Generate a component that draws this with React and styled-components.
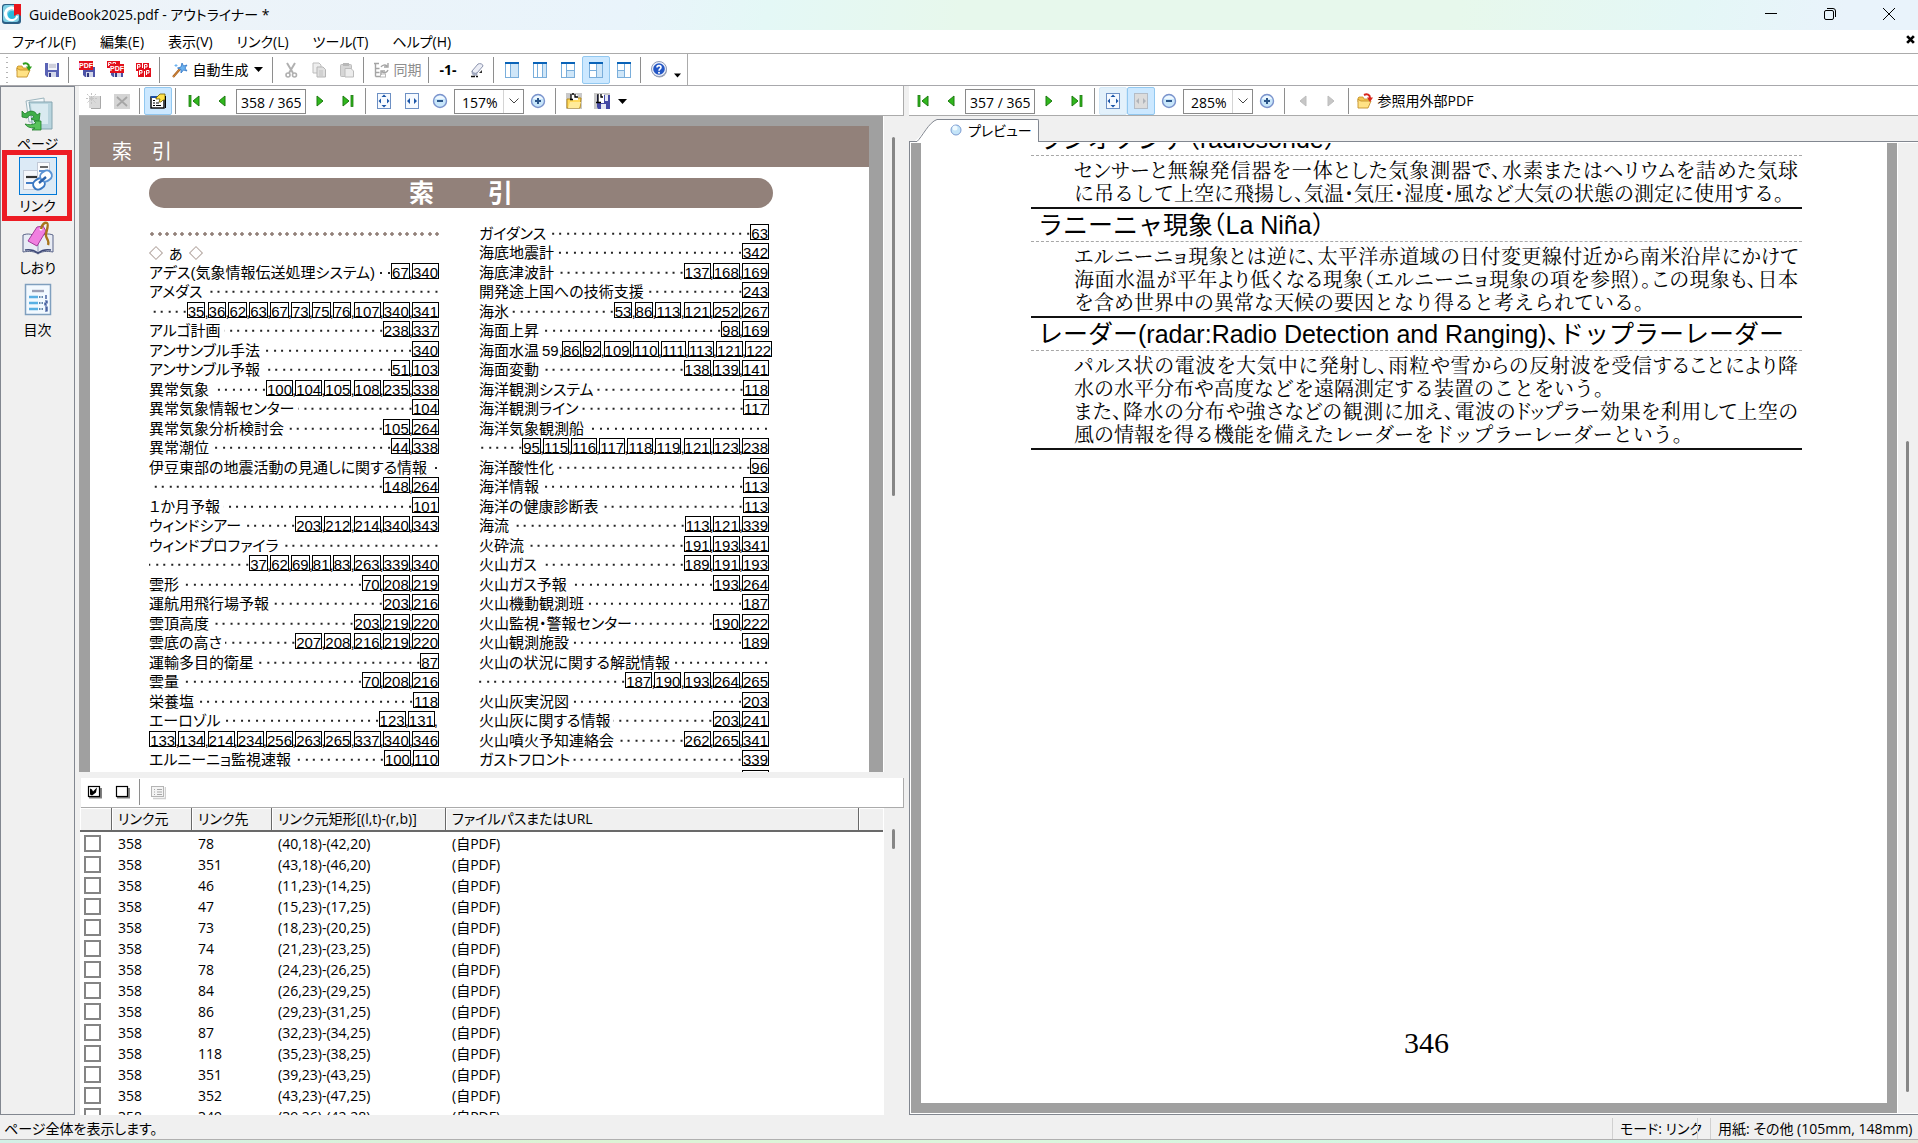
import React, { useState } from 'react';
import styled, { createGlobalStyle } from 'styled-components';

const UI_FONT = '"Open Sans", "Noto Sans CJK JP", sans-serif';
const DOC_FONT = '"Liberation Sans", "Noto Sans CJK JP", sans-serif';

const MENUS = ['ファイル(F)', '編集(E)', '表示(V)', 'リンク(L)', 'ツール(T)', 'ヘルプ(H)'];

// [label, linked pages, plain pages before the links]
const INDEX_LEFT = [
  ['アデス(気象情報伝送処理システム)', '67,340'],
  ['アメダス', ''],
  ['', '35,36,62,63,67,73,75,76,107,340,341'],
  ['アルゴ計画', '238,337'],
  ['アンサンブル手法', '340'],
  ['アンサンブル予報', '51,103'],
  ['異常気象', '100,104,105,108,235,338'],
  ['異常気象情報センター', '104'],
  ['異常気象分析検討会', '105,264'],
  ['異常潮位', '44,338'],
  ['伊豆東部の地震活動の見通しに関する情報', ''],
  ['', '148,264'],
  ['１か月予報', '101'],
  ['ウィンドシアー', '203,212,214,340,343'],
  ['ウィンドプロファイラ', ''],
  ['', '37,62,69,81,83,263,339,340'],
  ['雲形', '70,208,219'],
  ['運航用飛行場予報', '203,216'],
  ['雲頂高度', '203,219,220'],
  ['雲底の高さ', '207,208,216,219,220'],
  ['運輸多目的衛星', '87'],
  ['雲量', '70,208,216'],
  ['栄養塩', '118'],
  ['エーロゾル', '123,131,'],
  ['', '133,134,214,234,256,263,265,337,340,346'],
  ['エルニーニョ監視速報', '100,110'],
];

const INDEX_RIGHT = [
  ['ガイダンス', '63'],
  ['海底地震計', '342'],
  ['海底津波計', '137,168,169'],
  ['開発途上国への技術支援', '243'],
  ['海氷', '53,86,113,121,252,267'],
  ['海面上昇', '98,169'],
  ['海面水温', '86,92,109,110,111,113,121,122', '59,'],
  ['海面変動', '138,139,141'],
  ['海洋観測システム', '118'],
  ['海洋観測ライン', '117'],
  ['海洋気象観測船', ''],
  ['', '95,115,116,117,118,119,121,123,238'],
  ['海洋酸性化', '96'],
  ['海洋情報', '113'],
  ['海洋の健康診断表', '113'],
  ['海流', '113,121,339'],
  ['火砕流', '191,193,341'],
  ['火山ガス', '189,191,193'],
  ['火山ガス予報', '193,264'],
  ['火山機動観測班', '187'],
  ['火山監視・警報センター', '190,222'],
  ['火山観測施設', '189'],
  ['火山の状況に関する解説情報', ''],
  ['', '187,190,193,264,265'],
  ['火山灰実況図', '203'],
  ['火山灰に関する情報', '203,241'],
  ['火山噴火予知連絡会', '262,265,341'],
  ['ガストフロント', '339'],
  ['', '156'],
];

const ARTICLES = [
  {
    title: 'ラジオゾンデ（radiosonde）',
    lines: [
      'センサーと無線発信器を一体とした気象測器で、水素またはヘリウムを詰めた気球',
      'に吊るして上空に飛揚し、気温・気圧・湿度・風など大気の状態の測定に使用する。',
    ],
  },
  {
    title: 'ラニーニャ現象（La Niña）',
    lines: [
      'エルニーニョ現象とは逆に、太平洋赤道域の日付変更線付近から南米沿岸にかけて',
      '海面水温が平年より低くなる現象（エルニーニョ現象の項を参照）。この現象も、日本',
      'を含め世界中の異常な天候の要因となり得ると考えられている。',
    ],
  },
  {
    title: 'レーダー(radar:Radio Detection and Ranging)、ドップラーレーダー',
    lines: [
      'パルス状の電波を大気中に発射し、雨粒や雪からの反射波を受信することにより降',
      '水の水平分布や高度などを遠隔測定する装置のことをいう。',
      'また、降水の分布や強さなどの観測に加え、電波のドップラー効果を利用して上空の',
      '風の情報を得る機能を備えたレーダーをドップラーレーダーという。',
    ],
  },
];

const LINKS = [
  ['358', '78', '(40,18)-(42,20)'],
  ['358', '351', '(43,18)-(46,20)'],
  ['358', '46', '(11,23)-(14,25)'],
  ['358', '47', '(15,23)-(17,25)'],
  ['358', '73', '(18,23)-(20,25)'],
  ['358', '74', '(21,23)-(23,25)'],
  ['358', '78', '(24,23)-(26,25)'],
  ['358', '84', '(26,23)-(29,25)'],
  ['358', '86', '(29,23)-(31,25)'],
  ['358', '87', '(32,23)-(34,25)'],
  ['358', '118', '(35,23)-(38,25)'],
  ['358', '351', '(39,23)-(43,25)'],
  ['358', '352', '(43,23)-(47,25)'],
  ['358', '349', '(39,26)-(42,28)'],
];

/* ---------- icons ---------- */

const Icon = ({ size = 16, box = 16, children }) => (
  <svg width={size} height={size} viewBox={`0 0 ${box} ${box}`} aria-hidden="true">{children}</svg>
);

const AppLogo = () => (
  <Icon size={20} box={20}>
    <rect x="0" y="0" width="19" height="20" rx="3" fill="#2b5f86" />
    <rect x="1" y="1" width="16" height="17" rx="3" fill="#7fd0e6" />
    <path d="M13 5a6 6 0 1 0 2 7" fill="none" stroke="#fff" strokeWidth="3" />
    <circle cx="10" cy="11" r="4" fill="#29b7dc" />
    <path d="M12 0h7v12l-3-2-4 2z" fill="#e8141c" />
  </Icon>
);

const FolderIcon = ({ arrow = '#2f9e1c' }) => (
  <Icon>
    <path d="M1 5l1-1h4l1 2h5v3H1z" fill="#f3c64e" stroke="#c4912a" strokeWidth=".8" />
    <path d="M1 15V6l1 1 2 1h10l-3 7z" fill="#ffe285" stroke="#c4912a" strokeWidth=".9" />
    <path d="M7 2c3-1.500 6-.5 6 3" fill="none" stroke={arrow} strokeWidth="2" />
    <path d="M10 4.500h6L13 9z" fill={arrow} />
  </Icon>
);

const SaveIcon = () => (
  <Icon>
    <path d="M1 1h14v14H3l-2-2z" fill="#5a63b5" />
    <rect x="4" y="1" width="9" height="7" fill="#f2f4fa" />
    <path d="M5 3h7M5 5h7" stroke="#aab" strokeWidth="1" />
    <rect x="4" y="10" width="8" height="5" fill="#d4d8ea" />
    <rect x="5" y="11" width="2" height="4" fill="#343a80" />
  </Icon>
);

const Tag = ({ x, y }) => (
  <>
    <rect x={x} y={y} width="14" height="9" fill="#e3101c" />
    <text x={x + 7} y={y + 7} fontSize="7" fontWeight="700" fill="#fff" textAnchor="middle" fontFamily="Liberation Sans, sans-serif">PDF</text>
  </>
);

const PdfSaveIcon = ({ many }) => (
  <Icon size={17} box={17}>
    <path d="M4 6h12v10H6l-2-2z" fill="#4c53a8" />
    <rect x="7" y="11" width="7" height="5" fill="#d4d8ea" />
    <rect x="8" y="12" width="2" height="4" fill="#343a80" />
    {many && <rect x="0" y="0" width="13" height="7" fill="#e3101c" />}
    {many && <path d="M1.500 5V1.500H4V3.500H2M6 5V1.500h2.500v2H6.500" fill="none" stroke="#fff" strokeWidth=".9" />}
    <Tag x={many ? 3 : 0} y={many ? 3 : 0} />
  </Icon>
);

const PdfSplitIcon = () => (
  <Icon>
    <rect x="1" y="1" width="6" height="8" fill="#e3101c" />
    <rect x="8" y="1" width="6" height="8" fill="#e3101c" />
    <rect x="3" y="6" width="6" height="9" fill="#e3101c" />
    <rect x="10" y="6" width="6" height="9" fill="#e3101c" />
    <path d="M2.500 7V2.500H5V5H3M9.500 7V2.500H12V5h-2M4.500 13V8.500H7V11H5M11.500 13V8.500H14V11h-2" fill="none" stroke="#fff" />
  </Icon>
);

const WandIcon = () => (
  <Icon>
    <path d="M1 15l7-8" stroke="#a35a1c" strokeWidth="2.200" />
    <path d="M1 15l7-8" stroke="#e8a14a" strokeWidth=".8" />
    <path d="M10 1l1.500 3L15 3l-2 3 2 3-3.500-1L9 11V7.500L5.500 6 9 5z" fill="#6db3f0" stroke="#2f74c4" strokeWidth=".8" />
    <path d="M4 2v3M2.500 3.500h3" stroke="#6db3f0" />
  </Icon>
);

const CutIcon = () => (
  <Icon>
    <path d="M4 1l6 10M12 1L6 11" stroke="#b0b0b0" strokeWidth="2" />
    <circle cx="5" cy="13" r="2" fill="none" stroke="#b0b0b0" strokeWidth="1.600" />
    <circle cx="11.500" cy="13" r="2" fill="none" stroke="#b0b0b0" strokeWidth="1.600" />
  </Icon>
);

const CopyIcon = () => (
  <Icon>
    <path d="M2 1h6l2 2v8H2z" fill="#eee" stroke="#bdbdbd" />
    <path d="M6 5h6l2.500 2.500V15H6z" fill="#e0e0e0" stroke="#b5b5b5" />
    <path d="M8 9h4M8 11h4M8 13h4" stroke="#c2c2c2" />
  </Icon>
);

const PasteIcon = () => (
  <Icon>
    <rect x="1.500" y="2.500" width="11" height="12" rx="1" fill="#d6d6d6" stroke="#bdbdbd" />
    <rect x="4" y="1" width="6" height="3" fill="#b8b8b8" />
    <path d="M6 6.500h6l2.500 2.500v6H6z" fill="#ececec" stroke="#bcbcbc" />
  </Icon>
);

const SyncIcon = () => (
  <Icon>
    <path d="M1 1.500h5M2.500 1v13.500M2.500 6.500h4M2.500 10.500h4M2.500 14.500h5" stroke="#a4a4a4" strokeWidth="1.400" fill="none" />
    <path d="M8 5a4 4 0 0 1 6-1M15 1v4h-4M15 8a4 4 0 0 1-6 2M8 13V9h4" stroke="#a4a4a4" strokeWidth="1.400" fill="none" />
    <rect x="7.500" y="12" width="5" height="3" fill="none" stroke="#b8b8b8" />
  </Icon>
);

const EraserIcon = () => (
  <Icon>
    <path d="M3 9l6-7c2-1 5 0 5 2L8 11c-2 1-5 0-5-2z" fill="#eceef6" stroke="#8b93ad" />
    <path d="M3 9c0 2 3 3 5 2v2c-2 1-5 0-5-2z" fill="#aeb5c9" stroke="#8b93ad" strokeWidth=".6" />
    <path d="M2 14.500h4M7 14.500h2" stroke="#111" strokeWidth="1.300" />
    <path d="M10 11l3-3v3z" fill="#333" />
  </Icon>
);

const PaneIcon = ({ lines, fill }) => (
  <Icon>
    <rect x="1.500" y="1.500" width="13" height="14" fill="#fff" stroke="#7aaedb" />
    <path d={fill} fill="#cfe6f8" />
    <path d={lines} stroke="#7aaedb" fill="none" />
    <rect x="1" y="0" width="14" height="2" fill="#0a63b8" />
  </Icon>
);

const PANES = [
  ['M6.500 2v13', 'M7 2h7v13H7z'],
  ['M5.500 2v13M10.500 2v13', 'M11 2h3v13h-3z'],
  ['M6.500 2v13M6.500 8.500h8', 'M7 9h7v6H7z'],
  ['M8.500 2v13M1.500 8.500h7', 'M9 2h5v13H9z'],
  ['M8.500 2v13M1.500 8.500h7', 'M2 9h6v6H2z'],
];

const HelpIcon = () => (
  <Icon size={17} box={17}>
    <circle cx="8.500" cy="9" r="7.500" fill="#9aa3b4" />
    <circle cx="8" cy="8" r="7.500" fill="#eef2fb" stroke="#8e9ab8" />
    <circle cx="8" cy="8" r="5.800" fill="#2457c5" />
    <path d="M6 6.500C6 4 10 4 10 6.300 10 8 8 7.800 8 9.800" fill="none" stroke="#fff" strokeWidth="1.600" />
    <circle cx="8" cy="11.800" r="1" fill="#fff" />
  </Icon>
);

const Caret = ({ w = 9 }) => (
  <svg width={w} height="5" viewBox="0 0 9 5" aria-hidden="true"><path d="M0 0h9L4.500 5z" fill="#000" /></svg>
);

const NewLinkIcon = () => (
  <Icon>
    <path d="M3 3h11v12H3z" fill="#d9d9d9" />
    <path d="M14.500 3v12.500H5" fill="none" stroke="#a8a8a8" />
    <path d="M1 1l9 9M10 1L1 10M5.500 0v11M0 5.500h11" stroke="#c4c4c4" strokeDasharray="2 1" />
  </Icon>
);

const DeleteIcon = () => (
  <Icon>
    <rect x="0" y="1" width="16" height="15" fill="#d4d4d4" />
    <path d="M3 4l10 9M13 4L3 13" stroke="#a6a6a6" strokeWidth="1.800" />
  </Icon>
);

const PropertyIcon = () => (
  <Icon>
    <rect x="1" y="4" width="13" height="11" fill="#fff" stroke="#000" strokeWidth="1.400" />
    <path d="M3 7.500h2M3 10h2M3 12.500h2M6 12.500h5M6 10h3" stroke="#000" />
    <path d="M1 4h6" stroke="#1b4fa8" strokeWidth="2" />
    <path d="M6 5l4-4h5v6h-2l-2 2H9l1-3H6z" fill="#ffe14a" stroke="#6b5a00" strokeWidth=".8" />
    <path d="M15.500 3v12" stroke="#000" />
  </Icon>
);

const NavIcon = ({ dir, bar, gray }) => {
  const x = dir === 'prev' ? 'M11 3v10L5 8z' : 'M5 3v10l6-5z';
  const barX = dir === 'prev' ? 3 : 11;
  const edge = gray ? '#bdbdbd' : '#1d7a10';
  return (
    <Icon>
      <path d={x} fill={gray ? '#c6c6c6' : '#2fb81c'} stroke={edge} transform={bar ? `translate(${dir === 'prev' ? 2 : -2} 0)` : undefined} />
      {bar && <rect x={barX} y="2.500" width="2" height="11" fill="#2fb81c" stroke={edge} strokeWidth=".8" />}
    </Icon>
  );
};

const FitPageIcon = () => (
  <Icon>
    <rect x="1.500" y=".5" width="13" height="15" fill="#f6faff" stroke="#6d90c4" />
    <path d="M8 1.500L10.500 4h-5zM8 14.500L10.500 12h-5zM2.500 8L5 5.500v5zM13.500 8L11 5.500v5z" fill="#1c56a8" />
  </Icon>
);

const FitWidthIcon = ({ gray }) => (
  <Icon>
    <rect x="1.500" y=".5" width="13" height="15" fill={gray ? '#dcdcdc' : '#f6faff'} stroke={gray ? '#b4bcc6' : '#6d90c4'} />
    <path d="M3 8l3-3v6zM13 8l-3-3v6z" fill={gray ? '#b0b4ba' : '#1c56a8'} />
  </Icon>
);

const ZoomIcon = ({ plus }) => (
  <Icon>
    <circle cx="8" cy="8" r="6.500" fill="#c8e6fa" stroke="#7b93cc" strokeWidth="1.400" />
    <path d="M3 6a5.500 5.500 0 0 1 10 0z" fill="#eef8ff" />
    <path d={plus ? 'M5 8h6M8 5v6' : 'M5 8h6'} stroke="#2a5488" strokeWidth="2" />
  </Icon>
);

const ClipIcon = ({ save }) => (
  <Icon>
    <rect width="16" height="16" fill="#c9c9c9" />
    {save
      ? <path d="M3 2h13v14H4l-1-2z" fill="#4449a5" />
      : <path d="M1 15V6h5l1-1h8l-1 10z" fill="#ffd95c" stroke="#b58a1c" />}
    {save
      ? <path d="M4 1h6v9H4z" fill="#fff" />
      : <path d="M5 1h5l2 2v4H5z" fill="#fff" />}
    <path d={save ? 'M4 1v8M2 9.500h5M7 1v3h2' : 'M5 1v5M4 6.500h3M9 1v3h3M8 1H6'} stroke="#000" strokeWidth="1.300" fill="none" />
    {save && <rect x="11" y="2" width="3" height="6" fill="#e6e8f4" />}
    {save && <rect x="7" y="11" width="5" height="5" fill="#e6e8f4" />}
    {!save && <path d="M2 15l2-6h11l-2 6z" fill="#ffeb9a" />}
  </Icon>
);

const PagesIcon = () => (
  <Icon size={34} box={34}>
    <path d="M5 4l18-3 1 24H8z" fill="#f4f9fb" stroke="#9db5be" />
    <path d="M8 5h23v27H12z" fill="#b9d5de" stroke="#85a5b0" />
    <path d="M10 7h17v20H12z" fill="#d9eaf0" />
    <path d="M1 14l3 3c4-4 10-4 12 1l3-2-1 9-8-3 3-2c-2-3-5-2-7 1l-5-1z" fill="#3fae49" stroke="#1f7d2a" strokeWidth=".8" />
    <path d="M20 24v9h-9l3-2c-5 0-8-1-10-4 3 1 8 1 11-1l-2-2z" fill="#58c35c" stroke="#1f7d2a" strokeWidth=".8" />
  </Icon>
);

const ChainIcon = () => (
  <Icon size={34} box={34}>
    <rect x="16.500" y="3.500" width="12" height="15" fill="#fafbfd" stroke="#c2c9d6" />
    <path d="M19 8h8" stroke="#444" strokeWidth="1.600" />
    <path d="M18 12h9" stroke="#2f6fc0" strokeWidth="1.500" />
    <rect x="2.500" y="11.500" width="14" height="19" fill="#f5f7fb" stroke="#c2c9d6" />
    <path d="M5 18h11" stroke="#333" strokeWidth="2.200" />
    <path d="M5 24h8" stroke="#2f6fc0" strokeWidth="1.800" />
    <rect x="12" y="20" width="12" height="10" rx="5" fill="#fff" stroke="#3a78c2" strokeWidth="2" transform="rotate(-35 18 25)" />
    <rect x="19" y="12" width="12" height="10" rx="5" fill="#fff" stroke="#5b93d4" strokeWidth="2" transform="rotate(-35 25 17)" />
    <path d="M18 24l7-6" stroke="#2b62aa" strokeWidth="2.400" />
  </Icon>
);

const BookmarkIcon = () => (
  <Icon size={34} box={34}>
    <path d="M2 14c5-2 10-1 15 3 5-4 10-5 15-3v17c-6-1-11-1-15 2-4-3-9-3-15-2z" fill="#e8ecf5" stroke="#5a6488" />
    <path d="M17 17v15" stroke="#8b94b4" />
    <path d="M4 29c5-1 9 0 13 3 4-3 8-4 13-3" fill="none" stroke="#3f4a78" strokeWidth="1.500" />
    <path d="M16 6l6-1 3 5-9 15-9-5z" fill="#f07fe0" stroke="#a33a98" />
    <circle cx="20" cy="8" r="1.500" fill="#fff" />
    <path d="M20 8c1-5 4-7 6-6s0 6-1 11 4 5 2 11" fill="none" stroke="#a8741c" strokeWidth="2.400" />
  </Icon>
);

const TocIcon = () => (
  <Icon size={34} box={34}>
    <rect x="4.500" y="1.500" width="25" height="30" fill="#f2f9ff" stroke="#7f9fbe" strokeWidth="1.500" />
    <path d="M11 8h12" stroke="#9a9fb4" strokeWidth="2.400" />
    <path d="M8 14h9M8 20h9M8 26h9" stroke="#58b0e4" strokeWidth="2.600" />
    <path d="M18 14h5M18 20h5M18 26h5" stroke="#35608e" strokeWidth="1.600" strokeDasharray="1.500 1" />
    <path d="M25 12v4M24 18h2v2h-2v2h2M24 24h2v4h-2M24 26h2" stroke="#1d3c8a" strokeWidth="1.200" fill="none" />
  </Icon>
);

const CheckAllIcon = ({ checked }) => (
  <Icon>
    <path d="M2 13.500h12V4" fill="none" stroke="#808080" strokeWidth="2" />
    <rect x="1.500" y="2.500" width="11" height="10" fill="#fff" stroke="#000" strokeWidth="1.200" />
    {checked && <path d="M3 4.500l2 1 1 2 4-4-1 5-4 3-2-1z" fill="#000" />}
  </Icon>
);

const ListIcon = () => (
  <Icon>
    <path d="M3 14.500h12.500V3" fill="none" stroke="#d0d0d0" strokeWidth="1.500" />
    <rect x="1.500" y="2.500" width="12" height="10" fill="#f4f4f4" stroke="#b4b4b4" />
    <path d="M4 5.500h1M4 8h1M4 10.500h1M7 5.500h5M7 8h5M7 10.500h5" stroke="#a8a8a8" />
  </Icon>
);

/* ---------- pieces ---------- */

const NavGroup = ({ page, zoom, label, highlight }) => {
  const [value, setValue] = useState(page);
  return (
    <>
      <ToolButton aria-label="先頭ページ"><NavIcon dir="prev" bar /></ToolButton>
      <ToolButton aria-label="前ページ"><NavIcon dir="prev" /></ToolButton>
      <PageInput aria-label={label} value={value} onChange={(e) => setValue(e.target.value)} />
      <ToolButton aria-label="次ページ"><NavIcon dir="next" /></ToolButton>
      <ToolButton aria-label="最終ページ"><NavIcon dir="next" bar /></ToolButton>
      <Separator />
      <ToolButton aria-label="全体表示" $hover={highlight}><FitPageIcon /></ToolButton>
      <ToolButton aria-label="幅に合わせる" $active={highlight}><FitWidthIcon gray={highlight} /></ToolButton>
      <ToolButton aria-label="縮小"><ZoomIcon /></ToolButton>
      <ZoomBox>
        <ZoomSelect aria-label="倍率" defaultValue={zoom}>
          <option>{zoom}</option>
          <option>100%</option>
        </ZoomSelect>
        <ZoomArrow>
          <svg width="10" height="6" viewBox="0 0 10 6" aria-hidden="true"><path d="M.5.5L5 5 9.500.5" fill="none" stroke="#444" /></svg>
        </ZoomArrow>
      </ZoomBox>
      <ToolButton aria-label="拡大"><ZoomIcon plus /></ToolButton>
      <Separator />
    </>
  );
};

const IndexRow = ({ row }) => {
  const [label, pages, plain] = row;
  const list = pages ? pages.split(',') : [];
  return (
    <IndexLine>
      {label && <IndexLabel>{label}</IndexLabel>}
      <Leader />
      {(plain || pages) && (
        <Pages>
          {plain}
          {list.map((p, i) => (
            <React.Fragment key={i}>
              {p && <PageLink href={`#p${p}`}>{p}</PageLink>}
              {i < list.length - 1 && ','}
            </React.Fragment>
          ))}
        </Pages>
      )}
    </IndexLine>
  );
};

const IndexPage = () => (
  <IndexSheet>
    <SheetBand>索　引</SheetBand>
    <Pill><span>索</span><span>引</span></Pill>
    <IndexColumns>
      <IndexColumn>
        <BrownDots />
        <KanaHeading><Diamond />あ<Diamond /></KanaHeading>
        {INDEX_LEFT.map((row, i) => <IndexRow key={i} row={row} />)}
      </IndexColumn>
      <IndexColumn>
        {INDEX_RIGHT.map((row, i) => <IndexRow key={i} row={row} />)}
      </IndexColumn>
    </IndexColumns>
  </IndexSheet>
);

const LinkTable = () => (
  <TableArea>
    <TableScroll>
      <Table>
        <colgroup>
          <col width="32" /><col width="80" /><col width="80" /><col width="174" /><col /><col width="24" />
        </colgroup>
        <thead>
          <tr>
            <Th /><Th>リンク元</Th><Th>リンク先</Th><Th>リンク元矩形[(l,t)-(r,b)]</Th><Th>ファイルパスまたはURL</Th><Th $last />
          </tr>
        </thead>
        <tbody>
          {LINKS.map((link, i) => (
            <tr key={i}>
              <CheckCell><CheckBox type="checkbox" aria-label={`リンク ${link[2]}`} /></CheckCell>
              <Td>{link[0]}</Td>
              <Td>{link[1]}</Td>
              <Td>{link[2]}</Td>
              <Td>(自PDF)</Td>
              <Td />
            </tr>
          ))}
        </tbody>
      </Table>
    </TableScroll>
    <ScrollTrack $top={21} $length={20} />
  </TableArea>
);

const App = () => (
  <Window>
    <GlobalStyle />
    <TitleBar>
      <AppLogo />
      <Title>GuideBook2025.pdf - アウトライナー *</Title>
      <WindowButton aria-label="最小化"><svg width="12" height="12" viewBox="0 0 12 12"><path d="M0 5.500h12" stroke="#000" /></svg></WindowButton>
      <WindowButton aria-label="元に戻す">
        <svg width="12" height="12" viewBox="0 0 12 12" fill="none" stroke="#000">
          <rect x=".5" y="2.500" width="9" height="9" rx="1.500" />
          <path d="M3 .5h6a2.500 2.500 0 0 1 2.500 2.500v6" />
        </svg>
      </WindowButton>
      <WindowButton aria-label="閉じる"><svg width="12" height="12" viewBox="0 0 12 12"><path d="M0 0l12 12M12 0L0 12" stroke="#000" /></svg></WindowButton>
    </TitleBar>
    <MenuBar>
      {MENUS.map((m) => <MenuItem key={m}>{m}</MenuItem>)}
      <MdiClose aria-label="文書を閉じる">
        <svg width="9" height="9" viewBox="0 0 8 8"><path d="M1 1l6 6M7 1L1 7" stroke="#000" strokeWidth="2.400" /></svg>
      </MdiClose>
    </MenuBar>
    <MainToolbar>
      <Grip />
      <ToolButton aria-label="開く"><FolderIcon /></ToolButton>
      <ToolButton aria-label="保存"><SaveIcon /></ToolButton>
      <Separator />
      <ToolButton aria-label="PDF保存"><PdfSaveIcon /></ToolButton>
      <ToolButton aria-label="PDF一括保存"><PdfSaveIcon many /></ToolButton>
      <ToolButton aria-label="PDF分割"><PdfSplitIcon /></ToolButton>
      <Separator />
      <ToolButton $w={106}><WandIcon /><ToolText>自動生成</ToolText><Caret /></ToolButton>
      <Separator />
      <ToolButton aria-label="切り取り"><CutIcon /></ToolButton>
      <ToolButton aria-label="コピー"><CopyIcon /></ToolButton>
      <ToolButton aria-label="貼り付け"><PasteIcon /></ToolButton>
      <Separator />
      <ToolButton $w={58} $muted><SyncIcon /><ToolText>同期</ToolText></ToolButton>
      <Separator />
      <ToolButton $w={30} $bold>-1-</ToolButton>
      <ToolButton aria-label="消去"><EraserIcon /></ToolButton>
      <Separator />
      {PANES.map(([lines, fill], i) => (
        <ToolButton key={i} aria-label={`レイアウト${i + 1}`} $active={i === 3}><PaneIcon lines={lines} fill={fill} /></ToolButton>
      ))}
      <Separator />
      <ToolButton aria-label="ヘルプ"><HelpIcon /></ToolButton>
      <Overflow aria-label="その他"><Caret w={7} /></Overflow>
    </MainToolbar>

    <Body>
      <SideBar>
        <SideItem><SideFrame><PagesIcon /></SideFrame>ページ</SideItem>
        <SideItem $selected><SideFrame $selected><ChainIcon /></SideFrame>リンク</SideItem>
        <SideItem><SideFrame><BookmarkIcon /></SideFrame>しおり</SideItem>
        <SideItem><SideFrame><TocIcon /></SideFrame>目次</SideItem>
      </SideBar>

      <LeftPane>
        <PaneToolbar>
          <ToolButton aria-label="リンク追加"><NewLinkIcon /></ToolButton>
          <ToolButton aria-label="削除"><DeleteIcon /></ToolButton>
          <Separator />
          <ToolButton aria-label="プロパティ" $active><PropertyIcon /></ToolButton>
          <Separator />
          <NavGroup page="358 / 365" zoom="157%" label="ページ番号" />
          <ToolButton aria-label="リンク読込"><ClipIcon /></ToolButton>
          <ToolButton $w={44} $gap={8} aria-label="リンク保存"><ClipIcon save /><Caret /></ToolButton>
        </PaneToolbar>
        <Canvas>
          <CanvasView><IndexPage /></CanvasView>
          <ScrollTrack $top={21} $length={359} />
        </Canvas>
        <ListToolbar>
          <ToolButton aria-label="すべて選択"><CheckAllIcon checked /></ToolButton>
          <ToolButton aria-label="すべて解除"><CheckAllIcon /></ToolButton>
          <Separator />
          <ToolButton aria-label="一覧"><ListIcon /></ToolButton>
        </ListToolbar>
        <LinkTable />
      </LeftPane>

      <RightPane>
        <PaneToolbar>
          <NavGroup page="357 / 365" zoom="285%" label="プレビューのページ番号" highlight />
          <ToolButton aria-label="戻る"><NavIcon dir="prev" gray /></ToolButton>
          <ToolButton aria-label="進む"><NavIcon dir="next" gray /></ToolButton>
          <Separator />
          <ToolButton $w={124}><FolderIcon arrow="#d8261c" /><ToolText>参照用外部PDF</ToolText></ToolButton>
        </PaneToolbar>
        <TabStrip>
          <svg width="24" height="23" viewBox="0 0 24 23" aria-hidden="true">
            <path d="M0 23C6 21 16 3 24 .5V23z" fill="#fff" />
            <path d="M0 22.500h4C9 18 16 3 24 .5" fill="none" stroke="#828790" />
          </svg>
          <Tab><Icon size={14} box={14}><circle cx="7" cy="7" r="5" fill="#c4e4f8" stroke="#7b9bd0" /><circle cx="6" cy="5" r="2.500" fill="#effaff" /></Icon>プレビュー</Tab>
        </TabStrip>
        <Preview>
          <PreviewMat>
            <PreviewSheet>
              <Articles>
                {ARTICLES.map((a) => (
                  <Article key={a.title}>
                    <ArticleTitle>{a.title}</ArticleTitle>
                    <ArticleBody>
                      {a.lines.map((l) => <ArticleLine key={l} $full={!l.endsWith('。')}>{l}</ArticleLine>)}
                    </ArticleBody>
                  </Article>
                ))}
              </Articles>
              <Folio>346</Folio>
            </PreviewSheet>
          </PreviewMat>
          <ScrollTrack $top={298} $length={651} />
        </Preview>
      </RightPane>
    </Body>

    <StatusBar>
      <StatusText>ページ全体を表示します。</StatusText>
      <StatusCell $w={85}>モード: リンク</StatusCell>
      <StatusCell $w={13} />
      <StatusCell $w={208}>用紙: その他 (105mm, 148mm)</StatusCell>
    </StatusBar>
    <BottomEdge />
  </Window>
);

export default App;

const GlobalStyle = createGlobalStyle`
  * { box-sizing: border-box; }
  body { margin: 0; }
  button, input, select, table { font: inherit; color: inherit; }
  svg { flex: none; display: block; }
`;

const Window = styled.div`
  display: flex;
  flex-direction: column;
  height: 100vh;
  overflow: hidden;
  background: #f0f0f0;
  color: #000;
  font-family: ${UI_FONT};
  font-size: 14px;
  font-feature-settings: "palt";
  white-space: nowrap;
`;

const TitleBar = styled.header`
  display: flex;
  align-items: center;
  height: 30px;
  padding-left: 2px;
  padding-bottom: 2px;
  background: linear-gradient(100deg, #eef3f8 0%, #e9f4fb 33%, #e4f8f6 40%, #e7f8ec 50%, #e7f8ec 76%, #e4f7f6 88%, #e9f3fb 96%);
`;

const Title = styled.h1`
  flex: 1;
  margin: 0 0 0 7px;
  font-size: 14px;
  font-weight: 400;
`;

const WindowButton = styled.button`
  display: flex;
  align-items: center;
  justify-content: center;
  width: 59px;
  height: 28px;
  padding: 0;
  border: 0;
  background: none;
`;

const MenuBar = styled.nav`
  display: flex;
  align-items: center;
  height: 24px;
  border-bottom: 1px solid #ababab;
  background: #fff;
`;

const MenuItem = styled.button`
  padding: 0 12px;
  border: 0;
  background: none;
  line-height: 23px;
`;

const MdiClose = styled.button`
  margin-left: auto;
  padding: 0 3px 4px;
  border: 0;
  background: none;
`;

const ToolRow = styled.div`
  display: flex;
  align-items: center;
  flex: none;
  background: #fff;
`;

const MainToolbar = styled(ToolRow)`
  height: 32px;
  border-bottom: 1px solid #a8a8ac;
`;

const Grip = styled.div`
  width: 6px;
  height: 30px;
  margin: 0 0 0 4px;
  background-image: radial-gradient(circle, #b4b4b4 1px, transparent 1px);
  background-size: 6px 5px;
`;

const ToolButton = styled.button`
  display: flex;
  align-items: center;
  justify-content: center;
  gap: ${(p) => p.$gap || 5}px;
  flex: none;
  width: ${(p) => p.$w || 28}px;
  height: 28px;
  padding: 0;
  border: 1px solid ${(p) => (p.$active ? '#92c8f0' : p.$hover ? '#d4e9f8' : 'transparent')};
  border-radius: 2px;
  background: ${(p) => (p.$active ? '#cce8ff' : p.$hover ? '#e3f1fb' : 'none')};
  color: ${(p) => (p.$muted ? '#8d8d8d' : '#000')};
  font-weight: ${(p) => (p.$bold ? 700 : 400)};
`;

const ToolText = styled.span`
  line-height: 26px;
`;

const Separator = styled.span`
  flex: none;
  width: 1px;
  height: 26px;
  margin: 0 4px 0 2px;
  background: #8e8e8e;
`;

const Overflow = styled.button`
  display: flex;
  align-items: flex-end;
  width: 15px;
  height: 31px;
  padding: 0 0 7px 1px;
  border: 0;
  border-right: 1px solid #ababab;
  background: none;
`;

const PageInput = styled.input`
  flex: none;
  width: 70px;
  height: 25px;
  padding: 2px 4px 0;
  border: 1px solid #8a8a8a;
  background: #fff;
`;

const ZoomBox = styled.div`
  display: flex;
  flex: none;
  width: 70px;
  height: 25px;
  border: 1px solid #8a8a8a;
`;

const ZoomSelect = styled.select`
  appearance: none;
  width: 48px;
  padding: 2px 0 0 7px;
  border: 0;
  background: #fff;
`;

const ZoomArrow = styled.span`
  display: flex;
  align-items: center;
  justify-content: center;
  flex: 1;
  border-left: 1px solid #d4d4d4;
`;

const Body = styled.main`
  display: grid;
  grid-template-columns: 79px minmax(0, 830fr) minmax(0, 1009fr);
  flex: 1;
  min-height: 0;
`;

const SideBar = styled.aside`
  width: 75px;
  padding: 8px 0 0;
  border: 1px solid #828790;
  background: #f0f0f0;
`;

const SideItem = styled.button`
  position: relative;
  display: flex;
  flex-direction: column;
  align-items: center;
  width: 100%;
  height: 62px;
  padding: 0;
  border: 0;
  background: none;
  line-height: 22px;

  ${(p) => p.$selected && `
    &::after {
      content: '';
      position: absolute;
      top: -7px;
      right: 2px;
      bottom: -2px;
      left: 1px;
      border: 5px solid #ed1c24;
    }
  `}
`;

const SideFrame = styled.span`
  display: flex;
  align-items: center;
  justify-content: center;
  width: 38px;
  height: 38px;
  border: 1px solid ${(p) => (p.$selected ? '#0078d7' : 'transparent')};
  background: ${(p) => (p.$selected ? '#dceaf6' : 'none')};
`;

const LeftPane = styled.section`
  display: flex;
  flex-direction: column;
  min-width: 0;
  padding-right: 5px;
`;

const RightPane = styled.section`
  display: flex;
  flex-direction: column;
  min-width: 0;
`;

const PaneToolbar = styled(ToolRow)`
  height: 30px;
  padding: 1px 0 0 1px;
  border-right: 1px solid #ababab;
  border-bottom: 1px solid #ababab;

  ${Separator} {
    margin: 0 4px 0 3px;
  }

  ${RightPane} & {
    padding-left: 0;
    border-right: 0;
  }
`;

const Canvas = styled.div`
  display: flex;
  flex: 655 1 0;
  min-height: 0;
`;

const CanvasView = styled.div`
  flex: 1;
  min-width: 0;
  padding: 10px 14px 0 11px;
  overflow: hidden;
  background: #a0a0a0;
`;

const ScrollTrack = styled.div`
  flex: none;
  width: 21px;
  border-left: 1px solid #fff;
  background: #f0f0f0;

  &::before {
    content: '';
    display: block;
    width: 3px;
    height: ${(p) => p.$length}px;
    margin: ${(p) => p.$top}px 0 0 8px;
    border-radius: 2px;
    background: #868686;
  }
`;

const IndexSheet = styled.article`
  height: 100%;
  overflow: hidden;
  background: #fff;
  font-family: ${DOC_FONT};
`;

const SheetBand = styled.div`
  height: 41px;
  padding: 6px 0 0 22px;
  background: #92817a;
  color: #fff;
  font-size: 20px;
  line-height: 40px;
  font-feature-settings: normal;
`;

const Pill = styled.h2`
  display: flex;
  justify-content: center;
  gap: 54px;
  height: 30px;
  margin: 11px 96px 16px 59px;
  border-radius: 15px;
  background: #92817a;
  color: #fff;
  font-size: 25px;
  font-weight: 700;
  line-height: 31px;
`;

const IndexColumns = styled.div`
  display: grid;
  grid-template-rows: 100%;
  grid-template-columns: 1fr 1fr;
  gap: 40px;
  height: 565px;
  margin: 0 100px 0 59px;
`;

const IndexColumn = styled.div`
  display: grid;
  grid-template-rows: repeat(29, minmax(0, 1fr));
  min-width: 0;
  font-size: 15px;
`;

const IndexLine = styled.div`
  display: flex;
  align-items: baseline;
  min-width: 0;
  line-height: 20px;
`;

const IndexLabel = styled.span`
  flex: none;
  margin-right: 3px;
`;

const Leader = styled.span`
  flex: 1;
  align-self: stretch;
  min-width: 0;
  background: radial-gradient(circle at 4px 50%, #222 1px, transparent 1px), radial-gradient(circle at 12px 50%, #222 1px, transparent 1px);
  background-position: right center;
  background-size: 15px 20px;
`;

const Pages = styled.span`
  flex: none;
  padding-right: 1px;
`;

const PageLink = styled.a`
  display: inline-block;
  height: 14px;
  color: #000;
  line-height: 18px;
  text-decoration: none;
  outline: 1px solid #000;
`;

const BrownDots = styled.div`
  background: radial-gradient(circle at 3px 50%, #92817a 1px, #b8aca7 2px, transparent 2px), radial-gradient(circle at 11px 50%, #92817a 1px, #b8aca7 2px, transparent 2px);
  background-size: 15px 20px;
`;

const KanaHeading = styled.h3`
  display: flex;
  align-items: center;
  gap: 8px;
  margin: 0;
  padding-left: 2px;
  font-size: 14px;
  font-weight: 400;
`;

const Diamond = styled.span`
  width: 10px;
  height: 10px;
  border: 1px solid #b5a8a2;
  transform: rotate(45deg);
`;

const ListToolbar = styled(ToolRow)`
  height: 30px;
  margin: 6px 0 0 2px;
  border-right: 1px solid #ababab;
  border-bottom: 1px solid #ababab;
`;

const TableArea = styled.div`
  display: flex;
  flex: 307 1 0;
  min-height: 0;
  padding-left: 1px;
`;

const TableScroll = styled.div`
  flex: 1;
  min-width: 0;
  overflow: hidden;
  background: #fff;
`;

const Table = styled.table`
  width: 100%;
  table-layout: fixed;
  border-collapse: separate;
  border-spacing: 0;
`;

const Th = styled.th`
  height: 24px;
  padding: 1px 0 0 6px;
  border: solid #696969;
  border-width: 0 ${(p) => (p.$last ? 0 : 1)}px 2px 0;
  background: #f0f0f0;
  box-shadow: inset 1px 1px 0 #fff;
  font-weight: 400;
  line-height: 20px;
  text-align: left;
`;

const Td = styled.td`
  height: 21px;
  padding: 2px 0 0 6px;
  line-height: 19px;
`;

const CheckCell = styled.td`
  padding: 2px 0 0 4px;
`;

const CheckBox = styled.input`
  appearance: none;
  display: block;
  width: 17px;
  height: 17px;
  margin: 0;
  border: 2px solid #848484;
  background: #fff;
`;

const TabStrip = styled.div`
  display: flex;
  align-items: flex-end;
  flex: none;
  height: 26px;
  padding-left: 4px;
  background: #f0f0f0;
  box-shadow: inset 0 -1px 0 #828790;
`;

const Tab = styled.button`
  display: flex;
  align-items: center;
  gap: 5px;
  height: 23px;
  padding: 0 6px 3px 12px;
  border: solid #828790;
  border-width: 1px 1px 0 0;
  border-radius: 0 2px 0 0;
  background: #fff;
`;

const Preview = styled.div`
  display: flex;
  flex: 1;
  min-height: 0;
  padding: 1px 0 1px 1px;
  border: solid #828790;
  border-width: 0 0 1px 1px;
  background: #fff;
`;

const PreviewMat = styled.div`
  display: flex;
  flex: 1;
  min-width: 0;
  padding: 0 10px 10px;
  background: #a0a0a0;
`;

const PreviewSheet = styled.article`
  display: flex;
  flex-direction: column;
  justify-content: space-between;
  flex: 1;
  min-width: 0;
  padding: 0 85px 42px 110px;
  overflow: hidden;
  background: #fff;
`;

const Articles = styled.div`
  margin-top: -20px;
`;

const Article = styled.section`
  border-bottom: 2px solid #111;
`;

const ArticleTitle = styled.h2`
  height: 33px;
  margin: 0;
  padding-left: 7px;
  border-bottom: 1px dashed #a8a8a8;
  font-family: ${DOC_FONT};
  font-size: 25px;
  font-weight: 400;
  font-feature-settings: "halt";
  line-height: 32px;
`;

const ArticleBody = styled.div`
  padding: 2px 4px 3px 43px;
  font-family: "Noto Serif CJK JP", "Noto Sans CJK JP", serif;
  font-size: 20px;
`;

// full lines are justified to the measure, closing lines run free
const ArticleLine = styled.p`
  margin: 0;
  line-height: 23px;
  white-space: ${(p) => (p.$full ? 'normal' : 'nowrap')};
  font-feature-settings: ${(p) => (p.$full ? '"palt"' : '"halt"')};
  text-align-last: ${(p) => (p.$full ? 'justify' : 'left')};
`;

const Folio = styled.footer`
  padding-left: 20px;
  font-family: "Liberation Serif", serif;
  font-size: 30px;
  line-height: 36px;
  text-align: center;
`;

const StatusBar = styled.footer`
  display: flex;
  align-items: center;
  flex: none;
  height: 25px;
  padding-top: 2px;
  border-bottom: 1px solid #b0b0b0;
  background: #f0f0f0;
`;

const StatusText = styled.span`
  flex: 1;
  padding-left: 4px;
`;

const StatusCell = styled.span`
  width: ${(p) => p.$w}px;
  height: 21px;
  padding-left: 7px;
  border-left: 1px solid #d0d0d0;
  line-height: 22px;
`;

const BottomEdge = styled.div`
  flex: none;
  height: 3px;
  background: linear-gradient(90deg, #d3f0e6, #dcf3d4 30%, #dcf6dc 50%, #cdf7e4 85%, #e8e4d8);
`;
